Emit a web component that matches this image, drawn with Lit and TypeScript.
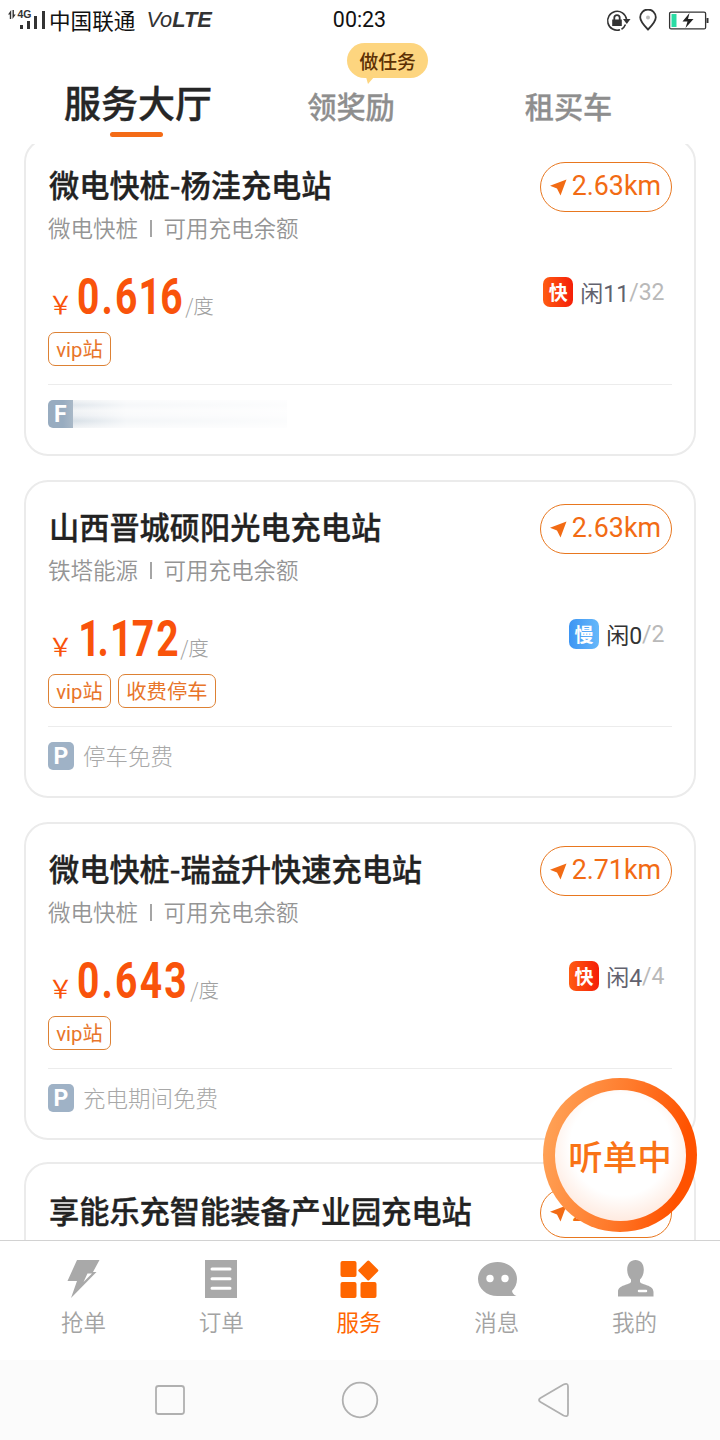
import { LitElement, html, css, svg, nothing } from "lit";
import { customElement, property } from "lit/decorators.js";

interface Details {
  operator: string;
  price: string;
  speed: "快" | "慢";
  idle: number;
  total: number;
  dark?: boolean;
  tags: string[];
  parking: string | null;
}

interface Station {
  name: string;
  distance: string;
  details?: Details;
}

const stations: Station[] = [
  { name: "微电快桩-杨洼充电站", distance: "2.63km", details: { operator: "微电快桩", price: "0.616", speed: "快", idle: 11, total: 32, tags: ["vip站"], parking: null } },
  { name: "山西晋城硕阳光电充电站", distance: "2.63km", details: { operator: "铁塔能源", price: "1.172", speed: "慢", idle: 0, total: 2, dark: true, tags: ["vip站", "收费停车"], parking: "停车免费" } },
  { name: "微电快桩-瑞益升快速充电站", distance: "2.71km", details: { operator: "微电快桩", price: "0.643", speed: "快", idle: 4, total: 4, tags: ["vip站"], parking: "充电期间免费" } },
  { name: "享能乐充智能装备产业园充电站", distance: "2.74km" },
];

@customElement("status-bar")
class StatusBar extends LitElement {
  static styles = css`
    :host { display: grid; grid-template-columns: 1fr auto 1fr; align-items: center; height: 38px; padding: 0 11px 2px 8px; color: #111; }
    .left, .right { display: flex; align-items: center; }
    .right { justify-content: flex-end; }
    .carrier { font-size: 21.6px; line-height: 36px; margin-left: 3px; }
    .volte { font: italic 21.8px/36px "Liberation Sans", sans-serif; color: #333; margin-left: 11px; }
    .volte b { font-weight: 700; }
    .time { font: 21.4px/40px Roboto, sans-serif; padding-left: 2px; }
    svg { display: block; margin-top: 1px; }
    .signal { margin-top: -1px; }
    .lock { margin-right: 8px; }
    .pin { margin-right: 10px; }
    .net { font: bold 10.500px "Liberation Sans", sans-serif; }
  `;
  render() {
    return html`
      <div class="left">
        <svg class="signal" width="38" height="24" viewBox="0 0 38 24" fill="#333">
          <path d="M0 6.500 3.200 2v9H1.800V6.500zM7.700 6.500 4.500 11V2h1.400v4.500z" />
          <text class="net" x="9.500" y="10">4G</text>
          <path d="M12 17h3v4h-3zM19 13h3v8h-3zM26 8h3v13h-3zM34 3h3v18h-3z" />
        </svg>
        <span class="carrier">中国联通</span>
        <span class="volte">Vo<b>LTE</b></span>
      </div>
      <div class="time">00:23</div>
      <div class="right">
        <svg class="lock" width="25" height="24" viewBox="0 0 25 24" fill="none" stroke="#333" stroke-width="1.6">
          <path d="M14 20.800A9.500 9.500 0 1 1 20.500 10" />
          <path d="M17 10h7.500l-3.700 5z" fill="#333" stroke="none" />
          <path d="M19.500 15.500a9.500 9.500 0 0 1-4 4.700" />
          <path d="M6.200 10.500h9.600V17H6.200z" fill="#333" stroke="none" />
          <path d="M8.300 11V8.800a2.700 2.700 0 0 1 5.400 0V11" stroke-width="1.800" />
        </svg>
        <svg class="pin" width="18" height="24" viewBox="0 0 18 24" fill="none" stroke="#333" stroke-width="1.800">
          <path d="M9 20.500C5 16.500 1.200 12.800 1.200 8.300a7.800 7.800 0 0 1 15.600 0c0 4.500-3.800 8.200-7.800 12.200z" />
          <circle cx="9" cy="8.500" r="2" fill="#bbb" stroke="none" />
        </svg>
        <svg width="42" height="20" viewBox="0 0 42 20">
          <rect x="2.600" y="1.100" width="36" height="16.800" rx="1.500" fill="none" stroke="#333" stroke-width="1.300" />
          <path d="M4.500 3h5v13h-5z" fill="#2bdca4" />
          <path d="M39.500 7h2v5h-2z" fill="#333" />
          <path d="M22.500 2 15.500 10.500h5l-2 6.500 8-9h-5.500z" fill="#222" />
        </svg>
      </div>`;
  }
}

@customElement("station-card")
class StationCard extends LitElement {
  @property({ attribute: false }) station!: Station;

  static styles = css`
    :host { display: block; box-sizing: border-box; height: 318px; flex: none; border: 2px solid #ebebeb; border-radius: 24px; padding: 22px; background: #fff; white-space: nowrap; }
    .head { display: flex; justify-content: space-between; height: 50px; }
    .name { font-size: 30.2px; line-height: 44px; font-weight: 500; color: #222; margin-left: 1px; -webkit-text-stroke: 0.35px #222; }
    .distance { box-sizing: border-box; width: 132px; height: 50px; border: 1.500px solid #e8771f; border-radius: 25px; display: flex; align-items: center; justify-content: flex-end; gap: 5px; padding: 0 10px 3px 0; font: 26.800px/46px Roboto, sans-serif; color: #f26b14; }
    .distance svg { margin-top: 4px; }
    .sub { display: flex; align-items: center; height: 30px; font-size: 22.500px; line-height: 30px; font-weight: 350; color: #959595; }
    .bar { width: 1.500px; height: 17px; margin: 2px 12px 0 12px; background: #a5a5a5; }
    .mid { display: flex; justify-content: space-between; height: 64px; margin-top: 18px; }
    .price { display: flex; align-items: baseline; line-height: 74px; color: #f9530b; }
    .yen { font-size: 25px; width: 29px; }
    .num { font: 700 50px/74px Roboto, sans-serif; display: inline-block; transform: scaleX(0.78); transform-origin: 0 50%; margin-right: -32px; letter-spacing: 2.800px; }
    .one { margin: 0 -3.600px 0 -1.500px; }
    .one:first-child { margin: 0 -5.100px 0 0; }
    .one.lead { margin: 0 -6.600px 0 1.500px; }
    .unit { font-size: 20.500px; font-weight: 300; color: #a0a0a0; margin-left: 2px; }
    .slots { display: flex; align-items: center; font: 23px Roboto, "Noto Sans CJK SC", sans-serif; color: #b9b9b9; padding-right: 7.500px; }
    .free { color: #62626e; }
    .free.dark { color: #333; }
    .badge { width: 30px; height: 30px; border-radius: 7px; margin-right: 7px; text-align: center; font: 700 19px/29px "Noto Sans CJK SC", sans-serif; color: #fff; background: linear-gradient(90deg, #ff5b12, #f51f08); }
    .badge.slow { background: linear-gradient(90deg, #3d95f3, #66b8fa); }
    .tags { display: flex; gap: 7px; height: 34px; margin-top: 8px; }
    .tag { box-sizing: border-box; border: 1.500px solid #dd8134; border-radius: 7px; padding: 0 7.300px; font: 20.300px/34px Roboto, "Noto Sans CJK SC", sans-serif; color: #e8752a; }
    .line { height: 1px; background: #ececec; margin-top: 18px; }
    .park { display: flex; align-items: center; height: 28px; margin-top: 15px; font-size: 22.500px; line-height: 28px; font-weight: 300; color: #a8a8a8; }
    .park .label { height: 30px; }
    .p { width: 26px; height: 28px; border-radius: 5px; background: #9fb2c6; color: #fff; font: 700 23px/29px Roboto, sans-serif; text-align: center; margin-right: 9px; }
    .hidden { display: flex; height: 28px; margin-top: 15px; }
    .hidden .p { width: 25px; margin: 0; border-radius: 5px 0 0 5px; background: linear-gradient(90deg, #98acc0 60%, #a9b8c7); overflow: hidden; text-align: left; text-indent: 6px; }
    .smear { width: 214px; height: 28px; background: linear-gradient(90deg, rgba(255, 255, 255, 0), rgba(255, 255, 255, 0.7) 25%, rgba(255, 255, 255, 0.9)), linear-gradient(#f2f4f6, #e0e6ec 18%, #f2f4f6 38%, #eceff3 55%, #d8e0e7 75%, #f2f4f6); }
  `;

  renderPrice(price: string) {
    return [...price].map((c, i) => (c === "1" ? html`<span class="one ${i === 0 ? "lead" : ""}">1</span>` : html`<span>${c}</span>`));
  }

  renderDetails(d: Details) {
    return html`
      <div class="sub"><span>${d.operator}</span><i class="bar"></i><span>可用充电余额</span></div>
      <div class="mid">
        <div class="price">
          <span class="yen">￥</span><span class="num">${this.renderPrice(d.price)}</span><span class="unit">/度</span>
        </div>
        <div class="slots">
          <span class="badge ${d.speed === "慢" ? "slow" : ""}">${d.speed}</span>
          <span class="free ${d.dark ? "dark" : ""}">闲${d.idle}</span>/${d.total}
        </div>
      </div>
      <div class="tags">${d.tags.map((t) => html`<span class="tag">${t}</span>`)}</div>
      <div class="line"></div>
      ${d.parking
        ? html`<div class="park"><span class="p">P</span><span class="label">${d.parking}</span></div>`
        : html`<div class="hidden"><span class="p">F</span><span class="smear"></span></div>`}
    `;
  }

  render() {
    const s = this.station;
    return html`
      <div class="head">
        <div class="name">${s.name}</div>
        <div class="distance">
          <svg width="17" height="17" viewBox="0 0 17 17" fill="#f26b14"><path d="M16.500.500 0 6.800l7 2.700 3.500 7z" /></svg>
          <span>${s.distance}</span>
        </div>
      </div>
      ${s.details ? this.renderDetails(s.details) : nothing}
    `;
  }
}

const navItems = [
  { label: "抢单", icon: svg`<path d="M14 0h22.500l-6.500 12H33.500L8 38l6-17H4.500z"/><path d="M24.500 13.500h4.500l-8.500 8.500z" fill="#fff"/>` },
  { label: "订单", icon: svg`<path d="M4 0h32v38H4z"/><path d="M11 9h18M11 18.700h18M11 28.300h18" stroke="#fff" stroke-width="3" stroke-linecap="round"/>` },
  { label: "服务", icon: svg`<rect x="1.500" y="1" width="16" height="16" rx="2"/><rect x="1.500" y="22" width="16" height="16" rx="2"/><rect x="21.500" y="22" width="16" height="16" rx="2"/><rect x="21.800" y="3" width="15" height="15" rx="1.500" transform="rotate(45 29.300 10.500)"/>`, active: true },
  { label: "消息", icon: svg`<path d="M20.500 2C31.500 2 40 9.500 40 19c0 5-2 8.800-5 12 .5 2.500 2 4 4.500 5H20.500C9.500 36 1 28.500 1 19S9.500 2 20.500 2z"/><circle cx="13" cy="18.500" r="3.700" fill="#fff"/><circle cx="28" cy="18.500" r="3.700" fill="#fff"/>` },
  { label: "我的", icon: svg`<path d="M20.500 0c5 0 8.300 3.800 8.300 9.500 0 5-1.500 7.500-3.800 10v2.500c1.500 3.200 13.500 2.500 13.500 10V36.500h-35.500V32c0-7.500 11.500-6.800 13-10v-2.500c-2.300-2.500-3.800-5-3.800-10C12.200 3.800 15.500 0 20.500 0z"/><path d="M24 31h7" stroke="#fff" stroke-width="2.500" stroke-linecap="round"/>` },
];

@customElement("app-root")
class AppRoot extends LitElement {
  static styles = css`
    :host { display: flex; flex-direction: column; position: relative; width: 720px; height: 1440px; overflow: hidden; background: #fff; font-family: "Noto Sans CJK SC", sans-serif; white-space: nowrap; }
    .tabs { display: grid; grid-template-columns: 216px 210px 225px; padding-left: 30px; height: 104px; flex: none; justify-items: center; }
    .tab { position: relative; font-size: 29.200px; font-weight: 500; color: #8e8e8e; line-height: 44px; padding-top: 43px; -webkit-text-stroke: 0.300px #8e8e8e; }
    .tab.active { display: flex; flex-direction: column; align-items: center; font-size: 37px; line-height: 54px; padding-top: 35px; color: #262626; -webkit-text-stroke: 0.400px #262626; }
    .underline { width: 53px; height: 5px; border-radius: 3px; background: #f46b16; margin: 3px 4px 0 0; }
    .tip { position: absolute; left: 40px; top: 3px; width: 81px; height: 35px; border-radius: 18px; background: #fdd57f; color: #5c3004; font-size: 18.800px; line-height: 35px; text-align: center; -webkit-text-stroke: 0; }
    .tip::after { content: ""; position: absolute; left: 19px; top: 34px; border: solid transparent; border-width: 0 6px 0 2px; border-top: 7px solid #fdd57f; }
    .list { height: 1096px; flex: none; overflow: hidden; display: flex; flex-direction: column; gap: 24px; padding: 0 24px; }
    station-card:first-child { margin-top: -6px; }
    station-card:last-child { margin-top: -2px; padding-top: 24px; }
    .nav { box-sizing: border-box; height: 120px; flex: none; border-top: 1px solid #d2d2d2; display: grid; grid-template-columns: repeat(5, 1fr); padding: 19px 16.500px 0 14.500px; justify-items: center; align-content: start; background: #fff; }
    .item { display: flex; flex-direction: column; align-items: center; gap: 6px; font-size: 22.500px; line-height: 33px; color: #a3a3a3; font-weight: 350; }
    .item svg { fill: #a9a9a9; display: block; }
    .item.active { color: #ff6600; font-weight: 400; }
    .item.active svg { fill: #ff6600; }
    .system { height: 80px; flex: none; background: #fbfbfb; display: flex; align-items: center; justify-content: space-between; padding: 0 150px; }
    .listen { position: absolute; left: 543px; top: 1078px; width: 154px; height: 154px; box-sizing: border-box; padding: 11.500px; border-radius: 50%; background: linear-gradient(100deg, #ffa75c, #ff7a2b 50%, #ff5200 85%); }
    .inner { height: 131px; border-radius: 50%; background: radial-gradient(circle at 50% 42%, #fff 50%, #ffe3d5 85%); color: #f97316; font-size: 34.500px; line-height: 131px; font-weight: 500; text-align: center; }
  `;

  render() {
    return html`
      <status-bar></status-bar>
      <div class="tabs">
        <div class="tab active">服务大厅<i class="underline"></i></div>
        <div class="tab">领奖励<span class="tip">做任务</span></div>
        <div class="tab">租买车</div>
      </div>
      <div class="list">${stations.map((s) => html`<station-card .station=${s}></station-card>`)}</div>
      <div class="nav">
        ${navItems.map((n) => html`
          <div class="item ${n.active ? "active" : ""}">
            <svg width="40" height="39" viewBox="0 0 40 39">${n.icon}</svg>
            <span>${n.label}</span>
          </div>`)}
      </div>
      <div class="system">
        <svg width="40" height="40" fill="none" stroke="#b0b0b0" stroke-width="1.800"><rect x="6" y="6" width="28" height="28" rx="2.500" /></svg>
        <svg width="40" height="40" fill="none" stroke="#b0b0b0" stroke-width="1.800"><circle cx="20" cy="20" r="17.300" /></svg>
        <svg width="40" height="40" fill="none" stroke="#b0b0b0" stroke-width="1.800"><path d="M10.500 18 33.500 4.500q4.500-2 4.500 2v27q0 4-4.500 2L10.500 22q-3-2 0-4z" /></svg>
      </div>
      <div class="listen"><div class="inner">听单中</div></div>
    `;
  }
}
